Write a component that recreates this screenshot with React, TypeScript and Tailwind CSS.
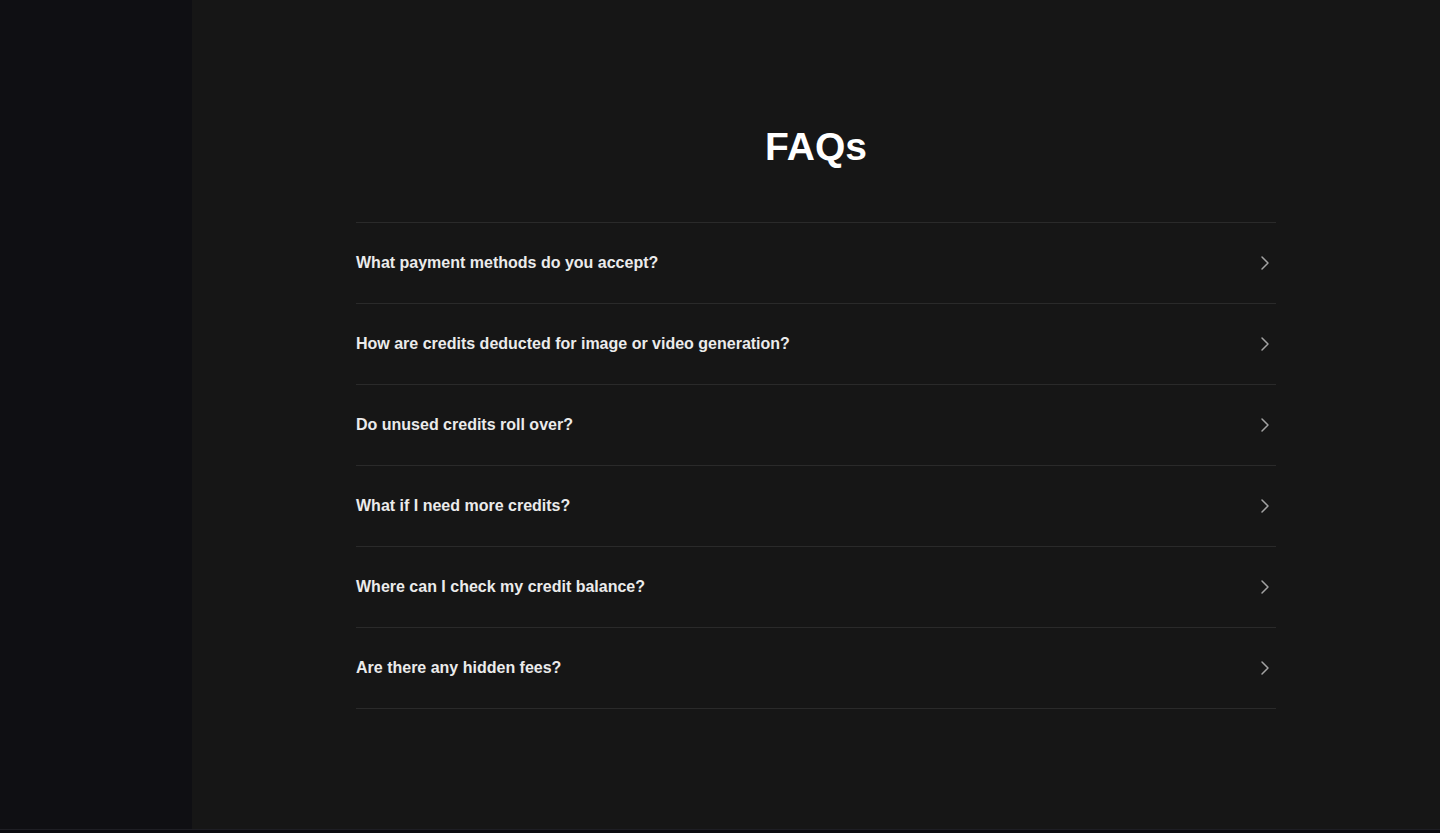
import React from "react";
import { ChevronRight } from "lucide-react";

const faqs = [
  "What payment methods do you accept?",
  "How are credits deducted for image or video generation?",
  "Do unused credits roll over?",
  "What if I need more credits?",
  "Where can I check my credit balance?",
  "Are there any hidden fees?",
];

export default function App() {
  return (
    <div
      className="w-[1440px] h-[833px] flex flex-col bg-[#0c0c0f] overflow-hidden"
      style={{ fontFamily: '"Liberation Sans", Arial, sans-serif' }}
    >
      <div className="flex h-[829px]">
        <aside className="w-[192px] shrink-0 bg-[#0f0f13]" />
        <main className="flex-1 bg-[#161616] flex flex-col items-center pt-[126px]">
          <h1 className="text-[39px] leading-[42px] font-bold text-white">FAQs</h1>
          <div className="w-[920px] mt-[54px] border-t border-[#2a2a2a]">
            {faqs.map((q) => (
              <div
                key={q}
                className="h-[81px] border-b border-[#2a2a2a] flex items-center justify-between"
              >
                <span className="text-[16px] font-bold text-[#ebebeb]">{q}</span>
                <ChevronRight size={24} strokeWidth={1.5} className="text-[#a3a3a3] mr-[-1px]" />
              </div>
            ))}
          </div>
        </main>
      </div>
      <div className="flex-1 border-t border-[#1e1e24] bg-[#0b0b0e]" />
    </div>
  );
}
